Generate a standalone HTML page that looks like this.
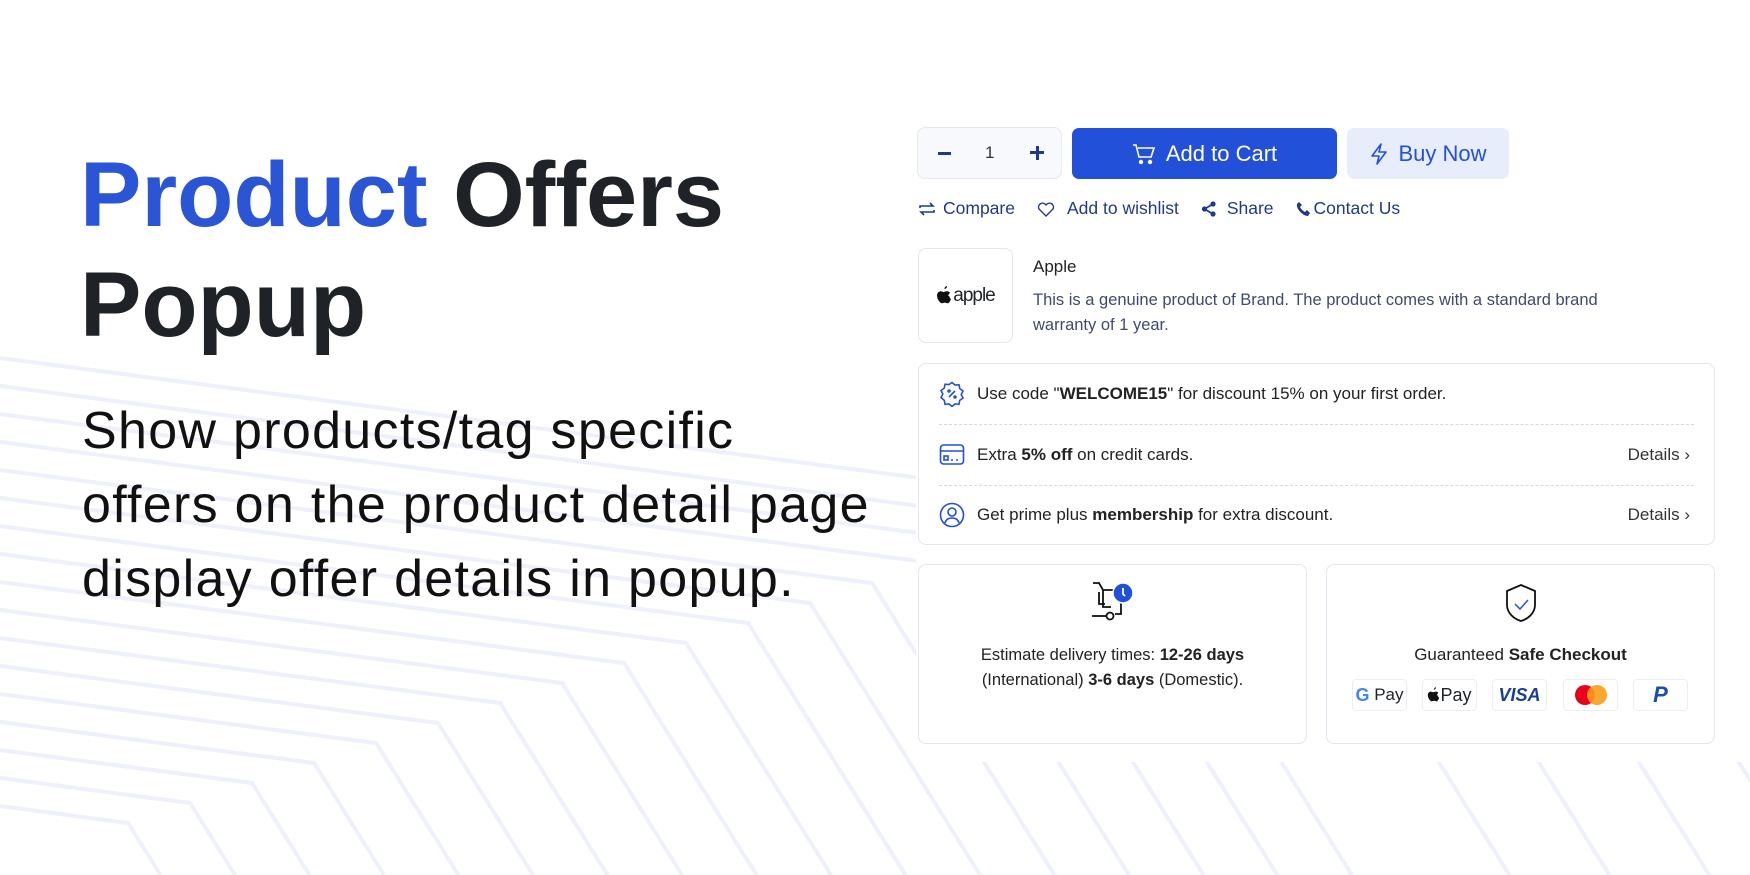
<!DOCTYPE html>
<html><head><meta charset="utf-8"><style>
*{margin:0;padding:0;box-sizing:border-box}
html,body{width:1750px;height:875px;overflow:hidden}
body{background:#fff;font-family:"Liberation Sans",sans-serif;position:relative;color:#1f2328}
.a{position:absolute}
.title{left:80px;top:140px;font-size:92px;font-weight:bold;line-height:110px;letter-spacing:0px;color:#1f2328}
.title span{color:#2a56d6}
.para{left:82px;top:394px;font-size:52px;line-height:74px;color:#111;letter-spacing:1.3px}
.box{border:1px solid #e3e6ee;border-radius:8px;background:#fff}
.links{top:198px;font-size:17.5px;color:#1f3a8a;display:flex;align-items:center}
.links svg{margin-right:7px}
.row{position:absolute;left:20px;right:20px;height:60px;display:flex;align-items:center;font-size:17px;color:#222}
.row .ic{width:26px;margin-right:12px;display:flex;justify-content:center}
.row .det{margin-left:auto;font-size:17px;color:#333;margin-right:4px}
.sep{position:absolute;left:20px;right:20px;border-top:1px dashed #d6d9e0}
.pay{position:absolute;top:679px;width:55px;height:32px;border:1px solid #eceef2;border-radius:4px;display:flex;align-items:center;justify-content:center;font-size:17px;background:#fff}
</style></head><body>
<svg class="a" style="left:0;top:0;overflow:hidden" width="1750" height="875">
<g fill="none" stroke="#eef1fb" stroke-width="4">
<polyline points="0,358 1120,504 1495,1104"/>
<polyline points="0,386 1058,524 1433,1124"/>
<polyline points="0,414 996,543 1371,1143"/>
<polyline points="0,442 934,563 1309,1163"/>
<polyline points="0,470 872,583 1247,1183"/>
<polyline points="0,498 810,603 1185,1203"/>
<polyline points="0,526 748,623 1123,1223"/>
<polyline points="0,554 686,643 1061,1243"/>
<polyline points="0,582 624,663 999,1263"/>
<polyline points="0,610 562,683 937,1283"/>
<polyline points="0,638 500,703 875,1303"/>
<polyline points="0,666 438,723 813,1323"/>
<polyline points="0,694 376,743 751,1343"/>
<polyline points="0,722 314,763 689,1363"/>
<polyline points="0,750 252,783 627,1383"/>
<polyline points="0,778 190,803 565,1403"/>
<polyline points="0,806 128,823 503,1423"/>
<polyline points="1250,460 1700,1180"/>
<polyline points="1350,460 1800,1180"/>
<polyline points="1450,460 1900,1180"/>
<polyline points="1550,460 2000,1180"/>
<polyline points="1650,460 2100,1180"/>
<polyline points="1750,460 2200,1180"/>
</g></svg>
<div class="a" style="left:916px;top:0;width:834px;height:762px;background:#fff"></div>

<div class="a title"><span>Product</span> Offers<br>Popup</div>
<div class="a para">Show products/tag specific<br>offers on the product detail page<br>display offer details in popup.</div>

<!-- qty -->
<div class="a box" style="left:917px;top:127px;width:145px;height:52px;background:#f8f9fc;border-color:#e6e9f0"></div>
<div class="a" style="left:938px;top:152px;width:13px;height:3px;background:#1f3a8a"></div>
<div class="a" style="left:985px;top:143px;font-size:17px;color:#333">1</div>
<div class="a" style="left:1030px;top:151px;width:14px;height:3px;background:#1f3a8a"></div>
<div class="a" style="left:1035.5px;top:145.5px;width:3px;height:14px;background:#1f3a8a"></div>
<div class="a" style="left:1072px;top:128px;width:265px;height:51px;background:#2350d8;border-radius:7px;color:#fff;font-size:22px;display:flex;align-items:center;justify-content:center">
<svg width="24" height="22" viewBox="0 0 24 22" style="margin-right:10px" fill="none" stroke="#fff" stroke-width="1.6"><path d="M1 2h3l3 12h12l3-9H6"/><circle cx="9" cy="19" r="1.4" fill="#fff"/><circle cx="18" cy="19" r="1.4" fill="#fff"/></svg>Add to Cart</div>
<div class="a" style="left:1347px;top:128px;width:162px;height:51px;background:#e8edfb;border-radius:7px;color:#2350d8;font-size:22px;display:flex;align-items:center;justify-content:center">
<svg width="20" height="22" viewBox="0 0 20 22" style="margin-right:9px" fill="none" stroke="#2350d8" stroke-width="1.6" stroke-linejoin="round"><path d="M12 1L3 13h7l-2 8 9-12h-7z"/></svg>Buy Now</div>

<div class="a links" style="left:918px">
<svg width="18" height="16" viewBox="0 0 18 16" fill="none" stroke="#1f3a8a" stroke-width="1.6"><path d="M2 7V5h13l-3-3M16 9v2H3l3 3"/></svg>Compare
<svg width="18" height="16" viewBox="0 0 18 16" style="margin-left:22px;margin-right:12px" fill="none" stroke="#1f3a8a" stroke-width="1.4"><path d="M9 15L2 8a4 4 0 016-5l1 1 1-1a4 4 0 016 5z"/></svg>Add to wishlist
<svg width="16" height="16" viewBox="0 0 16 16" style="margin-left:22px;margin-right:10px" fill="#1f3a8a"><circle cx="12" cy="3" r="2.6"/><circle cx="3.5" cy="8" r="2.6"/><circle cx="12" cy="13" r="2.6"/><path d="M3.5 8L12 3M3.5 8L12 13" stroke="#1f3a8a" stroke-width="1.8"/></svg>Share
<svg width="14" height="16" viewBox="0 0 14 16" style="margin-left:22px;margin-right:4px" fill="#1f3a8a"><path d="M3 1l3 3-2 2c1 2 3 4 5 5l2-2 3 3-2 3C7 15 0 8 1 3z"/></svg>Contact Us</div>

<!-- brand -->
<div class="a box" style="left:918px;top:248px;width:95px;height:95px;display:flex;align-items:center;justify-content:center">
<svg width="16" height="19" viewBox="0 0 16 19" fill="#111"><path d="M11 0c.2 1.4-1 3-2.5 3C8.3 1.6 9.5.2 11 0zM13.3 10c0 2 1.7 2.9 1.7 3-.5 1.5-1.8 4.3-3.3 4.3-1.2 0-1.5-.7-2.9-.7s-1.8.7-2.900.7C4.4 17.3 1 13.5 1 9.6 1 6.8 2.9 5.3 4.7 5.3c1.2 0 2.1.8 2.9.8.7 0 1.9-.9 3.3-.8.6 0 2.2.2 3.2 1.7-.1.1-1.8 1-1.8 3z"/></svg><span style="font-size:19px;letter-spacing:-1px;margin-left:1px">apple</span></div>
<div class="a" style="left:1033px;top:257px;font-size:17px;color:#222">Apple</div>
<div class="a" style="left:1033px;top:288px;width:615px;font-size:16.5px;line-height:25px;color:#3f4a6d">This is a genuine product of Brand. The product comes with a standard brand warranty of 1 year.</div>

<!-- offers -->
<div class="a box" style="left:918px;top:363px;width:797px;height:182px">
<div class="row" style="top:0"><span class="ic"><svg width="26" height="26" viewBox="0 0 26 26" fill="none" stroke="#2350d8" stroke-width="1.6"><path d="M13 1.5l3 2.5 4-.3.7 3.9 3.3 2.4-1.8 3.5 1.8 3.5-3.3 2.4-.7 3.9-4-.3-3 2.5-3-2.5-4 .3-.7-3.9L2 16.5l1.8-3.5L2 9.5l3.3-2.4.7-3.9 4 .3z"/><path d="M10 16l6-6"/><circle cx="10" cy="10" r="1"/><circle cx="16" cy="16" r="1"/></svg></span>Use code "<b>WELCOME15</b>" for discount 15% on your first order.</div>
<div class="sep" style="top:60px"></div>
<div class="row" style="top:61px"><span class="ic"><svg width="26" height="24" viewBox="0 0 26 24" fill="none" stroke="#2350d8" stroke-width="1.6"><rect x="1.5" y="2" width="23" height="19" rx="3"/><path d="M1.5 8h23"/><rect x="5" y="13" width="4" height="4"/><path d="M12 17h2M17 17h2"/></svg></span>Extra&nbsp;<b>5% off</b>&nbsp;on credit cards.<span class="det">Details ›</span></div>
<div class="sep" style="top:121px"></div>
<div class="row" style="top:121px"><span class="ic"><svg width="26" height="26" viewBox="0 0 26 26" fill="none" stroke="#2350d8" stroke-width="1.6"><circle cx="13" cy="13" r="11.5"/><circle cx="13" cy="10" r="4"/><path d="M6 21c1-4 4-5 7-5s6 1 7 5"/></svg></span>Get prime plus&nbsp;<b>membership</b>&nbsp;for extra discount.<span class="det">Details ›</span></div>
</div>

<!-- cards -->
<div class="a box" style="left:918px;top:564px;width:389px;height:180px"></div>
<svg class="a" style="left:1090px;top:580px" width="44" height="44" viewBox="0 0 44 44" fill="none" stroke="#111" stroke-width="1.8"><path d="M3 3h6l4 7v17h8"/><path d="M9 12v12h6"/><path d="M13 10h12l6 14v10h-6"/><circle cx="20" cy="36" r="3.5"/><path d="M2 36h14"/><circle cx="33" cy="13" r="10" fill="#2350d8" stroke="#fff" stroke-width="1.5"/><path d="M33 8v6l2 2" stroke="#fff"/></svg>
<div class="a" style="left:918px;top:643px;width:389px;text-align:center;font-size:16.5px;line-height:25px;color:#222">Estimate delivery times: <b>12-26 days</b><br>(International) <b>3-6 days</b> (Domestic).</div>

<div class="a box" style="left:1326px;top:564px;width:389px;height:180px"></div>
<svg class="a" style="left:1503px;top:583px" width="36" height="40" viewBox="0 0 36 40" fill="none" stroke="#111" stroke-width="1.8"><path d="M18 2l14 6v14c0 8-7 14-14 16C11 36 4 30 4 22V8z"/><path d="M12 21l5 5 8-9" stroke="#2350d8" stroke-width="1.5"/></svg>
<div class="a" style="left:1326px;top:645px;width:389px;text-align:center;font-size:17px;color:#222">Guaranteed <b>Safe Checkout</b></div>
<div class="pay" style="left:1352px"><b style="color:#4285f4;font-size:18px">G</b>&nbsp;Pay</div>
<div class="pay" style="left:1422px;font-size:18px"><svg width="13" height="16" viewBox="0 0 16 19" fill="#111"><path d="M11 0c.2 1.4-1 3-2.5 3C8.3 1.6 9.5.2 11 0zM13.3 10c0 2 1.7 2.9 1.7 3-.5 1.5-1.8 4.3-3.3 4.3-1.2 0-1.5-.7-2.9-.7s-1.8.7-2.9.7C4.4 17.3 1 13.5 1 9.6 1 6.8 2.9 5.3 4.7 5.3c1.2 0 2.1.8 2.9.8.7 0 1.9-.9 3.3-.8.6 0 2.2.2 3.2 1.7-.1.1-1.8 1-1.8 3z"/></svg>Pay</div>
<div class="pay" style="left:1492px;color:#1a3e96;font-weight:bold;font-style:italic;font-size:18px">VISA</div>
<div class="pay" style="left:1563px"><svg width="36" height="22"><circle cx="12" cy="11" r="10" fill="#eb001b"/><circle cx="24" cy="11" r="10" fill="#f79e1b" opacity=".9"/></svg></div>
<div class="pay" style="left:1633px;color:#1a4fb0;font-weight:bold;font-style:italic;font-size:22px">P</div>
</body></html>
